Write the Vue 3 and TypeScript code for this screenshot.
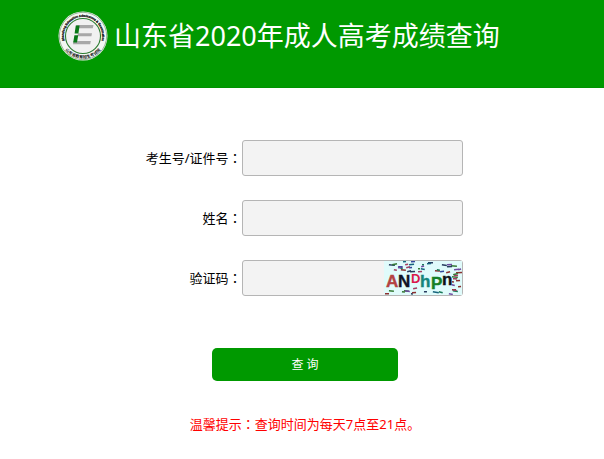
<script setup lang="ts">
import { ref } from 'vue'

interface Fleck {
  x: number
  y: number
  w: number
  angle: number
  color: string
}

const candidate = ref('')
const fullName = ref('')
const code = ref('')

const palette: string[] = ['#187a58', '#32479b', '#a33f62', '#17657d', '#6e4aa0', '#357a35', '#8c3030', '#263b5e']

// Short coloured strokes scattered over the verification picture.
function makeFlecks(count: number): Fleck[] {
  let seed = 71
  const next = (): number => {
    seed = (seed * 16807) % 2147483647
    return seed / 2147483647
  }
  next()
  return Array.from({ length: count }, () => ({
    x: Math.round(next() * 74),
    y: Math.round(next() * 32),
    w: 2 + Math.round(next() * 4),
    angle: Math.round(next() * 30 - 15),
    color: palette[Math.floor(next() * palette.length)],
  }))
}

const flecks = makeFlecks(120).filter((f) => f.y < 12 || f.y > 26 || f.x > 66)
</script>

<template>
  <div class="page">
    <header class="banner">
      <svg class="logo" viewBox="0 0 50 50" role="img" aria-label="山东省教育招生考试院">
        <defs>
          <path id="ring-top" d="M8.4 34.6 A19.2 19.2 0 1 1 41.6 34.6" />
          <path id="ring-bottom" d="M7 38.5 A22.6 22.6 0 0 0 43 38.5" />
        </defs>
        <circle cx="25" cy="25" r="24.5" fill="#f4f7f4" />
        <circle cx="25" cy="25" r="23.7" fill="none" stroke="#6f9870" stroke-width="0.7" />
        <circle cx="25" cy="25" r="17.5" fill="#f1f1f1" stroke="#2c7c31" stroke-width="1.1" />
        <text class="ring-text"><textPath href="#ring-top" startOffset="50%" text-anchor="middle">Shandong Education Admissions &amp; Examination</textPath></text>
        <text class="ring-cjk"><textPath href="#ring-bottom" startOffset="50%" text-anchor="middle">山东省教育招生考试院</textPath></text>
        <path d="M18.5 14 H35.5 L34.8 17.2 H17.8 Z M20 22.3 H34 L33.4 25.3 H19.4 Z M15.5 30 H32.8 L32.2 33.2 H15 Z" fill="#a8a8a8" />
        <path d="M17.8 14.6 H21.6 L20.4 22.4 H16.6 Z M16.4 24.2 H20.2 L19 31.4 H15.2 Z" fill="#087817" />
      </svg>
      <h1>山东省2020年成人高考成绩查询</h1>
    </header>

    <form class="query" @submit.prevent>
      <div class="row">
        <label for="candidate">考生号/证件号<span class="colon">：</span></label>
        <input id="candidate" v-model="candidate" type="text" />
      </div>
      <div class="row">
        <label for="name">姓名<span class="colon">：</span></label>
        <input id="name" v-model="fullName" type="text" />
      </div>
      <div class="row">
        <label for="code">验证码<span class="colon">：</span></label>
        <div class="code-box">
          <input id="code" v-model="code" type="text" />
          <svg class="captcha" viewBox="0 0 78 34" role="img" aria-label="验证码">
            <rect width="78" height="34" fill="#e0fbfb" />
            <rect
              v-for="(f, i) in flecks"
              :key="i"
              :x="f.x"
              :y="f.y"
              :width="f.w"
              height="1.5"
              :fill="f.color"
              :transform="`rotate(${f.angle} ${f.x} ${f.y})`"
            />
            <text class="glyph" x="2" y="26" fill="#b44343" stroke="#b44343">A</text>
            <text class="glyph" x="14" y="26" fill="#101326" stroke="#101326">N</text>
            <text class="glyph small" x="27" y="22" fill="#db174b">D</text>
            <text class="glyph" x="36" y="26" fill="#16857c" stroke="#16857c">h</text>
            <text class="glyph" x="47" y="28" fill="#168026" stroke="#168026">P</text>
            <text class="glyph" x="58" y="24" fill="#101018" stroke="#101018">n</text>
          </svg>
        </div>
      </div>
      <div class="actions">
        <button type="submit">查 询</button>
        <p class="tip">温馨提示<span class="colon">：</span>查询时间为每天7点至21点。</p>
      </div>
    </form>
  </div>
</template>

<style>
body {
  margin: 0;
  background: #fff;
}
</style>

<style scoped>
.page {
  color: #000;
  font-family: "Noto Sans", "Noto Sans CJK SC", sans-serif;
  font-size: 13px;
  line-height: 20px;
}

.banner {
  display: flex;
  align-items: flex-start;
  gap: 6px;
  box-sizing: border-box;
  height: 88px;
  padding: 11px 58px 0;
  background: #090;
  border-bottom: 1px solid #009200;
}

.logo {
  flex: none;
  width: 50px;
  height: 50px;
}

.ring-text {
  font: bold 3px "Liberation Sans", sans-serif;
  fill: #222;
  stroke: #222;
  stroke-width: 0.3;
}

.ring-cjk {
  font: bold 4px "Noto Sans CJK SC", sans-serif;
  fill: #111;
}

h1 {
  margin: 0;
  padding-top: 5px;
  color: #fff;
  font-size: 27px;
  font-weight: 400;
  line-height: 40px;
  white-space: nowrap;
}

.query {
  display: grid;
  gap: 24px;
  padding-top: 52px;
}

.row {
  display: grid;
  grid-template-columns: 40% 221px;
  align-items: center;
}

label {
  text-align: right;
}

.colon {
  font-family: "Noto Sans CJK TC", sans-serif;
}

input {
  display: block;
  box-sizing: border-box;
  width: 100%;
  height: 36px;
  padding: 0 8px;
  border: 1px solid #b5b5b5;
  border-radius: 3px;
  background: #f3f3f3;
  font: inherit;
}

.code-box {
  position: relative;
}

.code-box input {
  padding-right: 84px;
}

.captcha {
  position: absolute;
  top: 1px;
  right: 1px;
  width: 78px;
  height: 34px;
}

.glyph {
  font: bold 17px "Liberation Sans", sans-serif;
  stroke-width: 0.4;
}

.small {
  font-size: 13px;
}

.actions {
  display: flex;
  flex-direction: column;
  align-items: center;
  gap: 33px;
  padding: 28px 0 24px 6px;
}

button {
  width: 186px;
  height: 33px;
  padding: 0;
  border: 0;
  border-radius: 5px;
  background: #090;
  color: #fff;
  font: inherit;
  font-size: 12px;
}

.tip {
  margin: 0;
  color: #f00;
}
</style>
